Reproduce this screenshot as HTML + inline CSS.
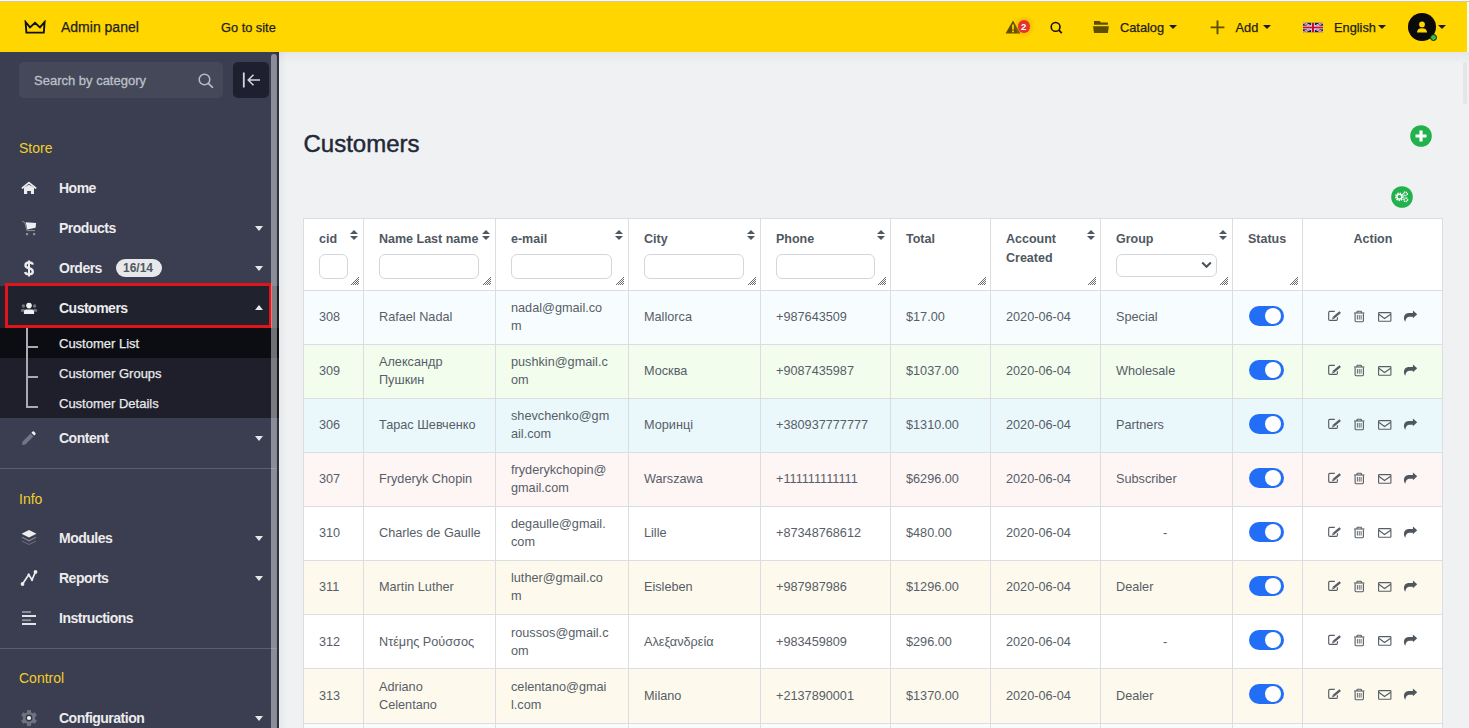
<!DOCTYPE html><html><head><meta charset="utf-8"><style>
*{box-sizing:border-box;margin:0;padding:0}
svg{display:block}
html,body{width:1469px;height:728px;overflow:hidden;font-family:"Liberation Sans",sans-serif;background:#eff1f3;position:relative}
.t{position:absolute;white-space:nowrap;line-height:1}
.ab{position:absolute}
#topline{position:absolute;left:0;top:0;width:1469px;height:2px;background:linear-gradient(to bottom,#f8f9fb 0,#f8f9fb 1px,#d3c89a 1px,#d3c89a 2px)}
#top{position:absolute;left:0;top:2px;width:1467px;height:50px;background:#ffd600}
#rscroll{position:absolute;left:1467px;top:2px;width:2px;height:50px;background:#fdfaee}
#side{position:absolute;left:0;top:52px;width:279px;height:676px;background:#3b3e50;overflow:hidden}
#sthumb{position:absolute;left:271px;top:54px;width:6px;height:674px;background:rgba(255,255,255,0.41);border-radius:3px 3px 0 0}
#strack{position:absolute;left:276px;top:52px;width:3px;height:676px;background:rgba(0,0,0,0.18)}
.mi{color:#ececee;font-weight:bold;font-size:14px;letter-spacing:-0.5px}
.sub{color:#e9e9ec;font-size:13px;-webkit-text-stroke:0.25px #e9e9ec}
.sec{color:#f1cf2b;font-size:14px}
.cd{position:absolute;width:0;height:0;border-left:4.5px solid transparent;border-right:4.5px solid transparent;border-top:5px solid #e8e8ea}
.cu{position:absolute;width:0;height:0;border-left:4.5px solid transparent;border-right:4.5px solid transparent;border-bottom:5px solid #e8e8ea}
.tc{position:absolute;width:0;height:0;border-left:4px solid transparent;border-right:4px solid transparent;border-top:4.5px solid #1a1a1a}
.hd{color:#4f5861;font-weight:bold;font-size:12.5px}
.cell{color:#575e68;font-size:12.7px}
.inp{position:absolute;height:25px;border:1px solid #d4d6d9;border-radius:6px;background:#fff}
.grip{position:absolute;width:8px;height:8px}
.sort{position:absolute;width:8px;height:10px}
</style></head><body><div id="topline"></div><div id="top"></div><div id="rscroll"></div><svg class="ab" style="left:24px;top:20px" width="23" height="16" viewBox="0 0 23 16"><path d="M1.6 2 L6 7.4 L11 2.8 L16 7.4 L20.6 2 L19.8 12.6 L2.4 12.6 Z" fill="none" stroke="#111" stroke-width="1.9" stroke-linejoin="miter"/></svg><div class="t" style="left:61px;top:20px;font-size:14px;color:#1e1e1e;-webkit-text-stroke:0.25px #1e1e1e">Admin panel</div><div class="t" style="left:221px;top:21.5px;font-size:12.8px;color:#1e1e1e;-webkit-text-stroke:0.25px #1e1e1e">Go to site</div><svg class="ab" style="left:1005px;top:20px" width="16" height="14" viewBox="0 0 16 14"><path d="M8 0.5 L15.5 13.5 L0.5 13.5 Z" fill="#5f5000"/><rect x="7.1" y="4.5" width="1.8" height="5" fill="#ffd600"/><rect x="7.1" y="10.5" width="1.8" height="1.8" fill="#ffd600"/></svg><div class="ab" style="left:1017.5px;top:20px;width:12.5px;height:12.5px;border-radius:50%;background:#e3342f;box-shadow:0 0 3px 3px rgba(235,150,0,0.3)"></div><div class="t" style="left:1021px;top:22.2px;font-size:9.5px;font-weight:bold;color:#fff">2</div><svg class="ab" style="left:1050px;top:21px" width="14" height="14" viewBox="0 0 14 14"><circle cx="5.6" cy="5.9" r="4.4" fill="none" stroke="#111" stroke-width="1.6"/><path d="M8.8 9.1 L11.8 12.1" stroke="#111" stroke-width="1.7"/></svg><svg class="ab" style="left:1092px;top:20px" width="18" height="15" viewBox="0 0 18 15"><path d="M2 1 H7.6 L9 2.6 H15.9 V4.8 H2 Z" fill="#5c4e00"/><path d="M1 6.2 H16.9 L15.9 12.9 H2 Z" fill="#5c4e00"/></svg><div class="t" style="left:1120px;top:21.7px;font-size:12.8px;color:#1e1e1e;-webkit-text-stroke:0.25px #1e1e1e">Catalog</div><div class="tc" style="left:1169px;top:25px"></div><svg class="ab" style="left:1209.5px;top:19.5px" width="15" height="15" viewBox="0 0 15 15"><path d="M7.5 0.6 V14.2 M0.6 7.4 H14.4" stroke="#5c4e00" stroke-width="1.9"/></svg><div class="t" style="left:1235.5px;top:21.7px;font-size:12.8px;color:#1e1e1e;-webkit-text-stroke:0.25px #1e1e1e">Add</div><div class="tc" style="left:1263px;top:25px"></div><svg class="ab" style="left:1303px;top:22px" width="20" height="11" viewBox="0 0 60 30"><clipPath id="fc"><rect width="60" height="30"/></clipPath><g clip-path="url(#fc)"><rect width="60" height="30" fill="#012169"/><path d="M0,0 L60,30 M60,0 L0,30" stroke="#fff" stroke-width="6"/><path d="M0,0 L60,30 M60,0 L0,30" stroke="#C8102E" stroke-width="2.5"/><path d="M30,0 V30 M0,15 H60" stroke="#fff" stroke-width="10"/><path d="M30,0 V30 M0,15 H60" stroke="#C8102E" stroke-width="6"/></g></svg><div class="t" style="left:1334px;top:21.7px;font-size:12.8px;color:#1e1e1e;-webkit-text-stroke:0.25px #1e1e1e">English</div><div class="tc" style="left:1378px;top:25px"></div><div class="ab" style="left:1408px;top:13px;width:28px;height:28px;border-radius:50%;background:#0a0a0a"></div><svg class="ab" style="left:1414px;top:18px" width="16" height="16" viewBox="0 0 16 16"><circle cx="8" cy="6.4" r="2.9" fill="#ffd600"/><path d="M3 14.6 Q3 10.2 8 10.2 Q13 10.2 13 14.6 Z" fill="#ffd600"/></svg><div class="ab" style="left:1429.5px;top:34px;width:7px;height:7px;border-radius:50%;background:#2fbf4a;border:1px solid #1a1a00"></div><div class="tc" style="left:1438px;top:25px"></div><div class="ab" style="left:1463px;top:62px;width:4px;height:42px;border-radius:2px;background:rgba(0,0,0,0.045)"></div><div id="side"></div><div class="ab" style="left:19px;top:62px;width:204px;height:36px;border-radius:5px;background:#444858"></div><div class="t" style="left:34px;top:73.5px;font-size:13px;color:#bdc0ca;-webkit-text-stroke:0.3px #bdc0ca">Search by category</div><svg class="ab" style="left:198px;top:73px" width="16" height="15" viewBox="0 0 16 15"><circle cx="6.5" cy="6.5" r="5.3" fill="none" stroke="#b9bcc6" stroke-width="1.5"/><path d="M10.3 10.3 L14.5 14.3" stroke="#b9bcc6" stroke-width="1.6" stroke-linecap="round"/></svg><div class="ab" style="left:233px;top:62px;width:36px;height:36px;border-radius:5px;background:#1e2030"></div><svg class="ab" style="left:242px;top:72px" width="19" height="16" viewBox="0 0 19 16"><path d="M1.8 0.5 V15.5" stroke="#d6d7dd" stroke-width="1.8"/><path d="M6.2 8 H18 M11.5 2.7 L6.2 8 L11.5 13.3" fill="none" stroke="#d6d7dd" stroke-width="1.5"/></svg><div class="t sec" style="left:19px;top:141px">Store</div><div class="t mi" style="left:59px;top:180.5px">Home</div><svg class="ab" style="left:17px;top:176px" width="25" height="25" viewBox="0 0 25 25"><path d="M5.4 12 L11.9 6.6 L18.6 12" fill="none" stroke="#ececee" stroke-width="1.7" stroke-linecap="round" stroke-linejoin="round"/><path d="M7 11.6 L11.9 8.7 L17 11.6 V18 H13.9 V15.1 H10.2 V18 H7 Z" fill="#ececee"/></svg><div class="t mi" style="left:59px;top:220.5px">Products</div><svg class="ab" style="left:17px;top:215px" width="25" height="25" viewBox="0 0 25 25"><path d="M5.2 6.3 L7.9 7.6 L10 15.6 H18" fill="none" stroke="#8e909a" stroke-width="1"/><path d="M8.7 7.3 L19.1 8 L18.6 12.8 L10.3 14.5 Z" fill="#eeeef0"/><rect x="9" y="18" width="2.2" height="2.2" fill="#8e909a"/><rect x="16" y="18" width="2.2" height="2.2" fill="#8e909a"/></svg><div class="cd" style="left:255px;top:226px"></div><div class="t mi" style="left:59px;top:260.5px">Orders</div><svg class="ab" style="left:24px;top:260px" width="10" height="17" viewBox="0 0 10 17"><path d="M5 0.5 V16.5" stroke="#ececee" stroke-width="2"/><path d="M8.8 4.6 Q8.4 2.5 5 2.5 Q1.4 2.5 1.4 5.2 Q1.4 7.3 5 8.2 Q8.8 9.2 8.8 11.8 Q8.8 14.4 5 14.4 Q1.6 14.4 1.1 12" fill="none" stroke="#ececee" stroke-width="2.3"/></svg><div class="cd" style="left:255px;top:266px"></div><div class="ab" style="left:116px;top:259px;width:46px;height:18px;border-radius:9px;background:#e8e8ea"></div><div class="t" style="left:123px;top:262px;font-size:12px;font-weight:bold;color:#4f5862">16/14</div><div class="ab" style="left:0;top:286px;width:279px;height:42px;background:#20222d"></div><div class="ab" style="left:0;top:328px;width:279px;height:90px;background:#1e1f2a"></div><div class="ab" style="left:0;top:328px;width:279px;height:30px;background:#0c0d13"></div><div class="ab" style="left:5px;top:283px;width:267px;height:45px;border:3px solid #e0141a"></div><div class="t mi" style="left:59px;top:300.5px">Customers</div><svg class="ab" style="left:17px;top:296px" width="25" height="25" viewBox="0 0 25 25"><circle cx="6.4" cy="10" r="1.7" fill="#70727c"/><circle cx="17.6" cy="10" r="1.7" fill="#70727c"/><path d="M3.9 15.8 V14.2 Q3.9 12.9 5.5 12.9 H7.8 L6.6 15.8 Z M20.1 15.8 V14.2 Q20.1 12.9 18.5 12.9 H16.2 L17.4 15.8 Z" fill="#70727c"/><circle cx="12" cy="9.6" r="2.8" fill="#f0f0f2"/><path d="M6.9 18 V15.4 Q6.9 13.6 9 13.6 H15 Q17.1 13.6 17.1 15.4 V18 Z" fill="#f0f0f2"/></svg><div class="cu" style="left:255px;top:305px"></div><div class="ab" style="left:26px;top:328px;width:2px;height:80px;background:#a9abb2"></div><div class="ab" style="left:26px;top:346px;width:12px;height:2px;background:#a9abb2"></div><div class="ab" style="left:26px;top:376px;width:12px;height:2px;background:#a9abb2"></div><div class="ab" style="left:26px;top:406px;width:12px;height:2px;background:#a9abb2"></div><div class="t sub" style="left:59px;top:336.8px">Customer List</div><div class="t sub" style="left:59px;top:366.8px">Customer Groups</div><div class="t sub" style="left:59px;top:396.8px">Customer Details</div><div class="t mi" style="left:59px;top:430.5px">Content</div><svg class="ab" style="left:20px;top:429px" width="18" height="18" viewBox="0 0 18 18"><path d="M2 16 L2.6 12.6 L10.6 4.6 L13.4 7.4 L5.4 15.4 Z" fill="#737682"/><path d="M11.4 3.8 L12.6 2.6 Q13.3 1.9 14 2.6 L15.4 4 Q16.1 4.7 15.4 5.4 L14.2 6.6 Z" fill="#f2f2f4"/></svg><div class="cd" style="left:255px;top:436px"></div><div class="ab" style="left:0;top:468px;width:277px;height:1px;background:#5a5e70"></div><div class="t sec" style="left:19px;top:491.5px">Info</div><div class="t mi" style="left:59px;top:530.5px">Modules</div><svg class="ab" style="left:21px;top:529px" width="16" height="17" viewBox="0 0 16 17"><path d="M8 1 L15.5 4.8 L8 8.6 L0.5 4.8 Z" fill="#eeeef0"/><path d="M1.6 8 L8 11.3 L14.4 8 L15.5 8.6 L8 12.4 L0.5 8.6 Z" fill="#8e909a"/><path d="M1.6 11.7 L8 15 L14.4 11.7 L15.5 12.3 L8 16.1 L0.5 12.3 Z" fill="#6c6f7b"/></svg><div class="cd" style="left:255px;top:536px"></div><div class="t mi" style="left:59px;top:570.5px">Reports</div><svg class="ab" style="left:20px;top:569px" width="19" height="18" viewBox="0 0 19 18"><path d="M2.5 15 L8.7 5.8 L12 10.8 L15.5 2.9" fill="none" stroke="#ececee" stroke-width="1.7"/><circle cx="2.5" cy="15" r="1.9" fill="#ececee"/><circle cx="15.5" cy="2.9" r="1.9" fill="#ececee"/><circle cx="8.7" cy="5.8" r="1.2" fill="#ececee"/><circle cx="12" cy="10.8" r="1.2" fill="#ececee"/></svg><div class="cd" style="left:255px;top:576px"></div><div class="t mi" style="left:59px;top:610.5px">Instructions</div><svg class="ab" style="left:22px;top:610px" width="15" height="16" viewBox="0 0 15 16"><path d="M0 2 H9" stroke="#8e909a" stroke-width="1.9"/><path d="M0 6 H14" stroke="#ececee" stroke-width="1.9"/><path d="M0 10.2 H9" stroke="#8e909a" stroke-width="1.9"/><path d="M0 14 H14" stroke="#ececee" stroke-width="1.9"/></svg><div class="ab" style="left:0;top:648px;width:277px;height:1px;background:#5a5e70"></div><div class="t sec" style="left:19px;top:671px">Control</div><div class="t mi" style="left:59px;top:710.5px">Configuration</div><svg class="ab" style="left:20px;top:709px" width="18" height="18" viewBox="0 0 18 18"><g fill="#70737f"><circle cx="9" cy="9" r="6"/><rect x="7" y="1" width="4" height="16" rx="0.6"/><rect x="7" y="1" width="4" height="16" rx="0.6" transform="rotate(60 9 9)"/><rect x="7" y="1" width="4" height="16" rx="0.6" transform="rotate(120 9 9)"/></g><circle cx="9" cy="9" r="3.4" fill="#33364a"/><circle cx="9" cy="9" r="2.1" fill="#f0f0f2"/></svg><div class="cd" style="left:255px;top:716px"></div><div id="strack"></div><div id="sthumb"></div><div class="ab" style="left:279px;top:52px;width:1190px;height:12px;background:linear-gradient(to bottom,rgba(0,0,0,0.045),rgba(0,0,0,0))"></div><div class="ab" style="left:279px;top:52px;width:8px;height:676px;background:linear-gradient(to right,rgba(0,0,0,0.035),rgba(0,0,0,0))"></div><div class="t" style="left:303.5px;top:132px;font-size:24px;color:#1f2937;-webkit-text-stroke:0.45px #1f2937">Customers</div><svg class="ab" style="left:1410px;top:125px" width="22" height="22" viewBox="0 0 22 22"><circle cx="11" cy="11" r="10.8" fill="#22b24c"/><path d="M11 5.5 V16.5 M5.5 11 H16.5" stroke="#fff" stroke-width="3.2"/></svg><svg class="ab" style="left:1391px;top:186px" width="22" height="22" viewBox="0 0 22 22"><circle cx="11" cy="11" r="10.8" fill="#22b24c"/><circle cx="8.4" cy="10.8" r="3.3" fill="none" stroke="#fff" stroke-width="2.2" stroke-dasharray="1.3 0.9"/><circle cx="8.4" cy="10.8" r="2.4" fill="none" stroke="#fff" stroke-width="1.3"/><circle cx="14.4" cy="7.9" r="1.8" fill="none" stroke="#fff" stroke-width="1.5" stroke-dasharray="1 0.6"/><circle cx="14.8" cy="13.8" r="1.8" fill="none" stroke="#fff" stroke-width="1.5" stroke-dasharray="1 0.6"/></svg><div class="ab" style="left:303px;top:218px;width:1140px;height:72px;background:#fff"></div><div class="ab" style="left:303px;top:290px;width:1140px;height:54px;background:#f7fdfe"></div><div class="ab" style="left:303px;top:344px;width:1140px;height:54px;background:#f2fdee"></div><div class="ab" style="left:303px;top:398px;width:1140px;height:54px;background:#eaf8fc"></div><div class="ab" style="left:303px;top:452px;width:1140px;height:54px;background:#fef5f5"></div><div class="ab" style="left:303px;top:506px;width:1140px;height:54px;background:#ffffff"></div><div class="ab" style="left:303px;top:560px;width:1140px;height:54px;background:#fdf9ec"></div><div class="ab" style="left:303px;top:614px;width:1140px;height:54px;background:#ffffff"></div><div class="ab" style="left:303px;top:668px;width:1140px;height:55px;background:#fdf9ec"></div><div class="ab" style="left:303px;top:723px;width:1140px;height:54px;background:#f7fdfe"></div><div class="ab" style="left:303px;top:218px;width:1px;height:510px;background:#dcdde1"></div><div class="ab" style="left:363px;top:218px;width:1px;height:510px;background:#dcdde1"></div><div class="ab" style="left:495px;top:218px;width:1px;height:510px;background:#dcdde1"></div><div class="ab" style="left:628px;top:218px;width:1px;height:510px;background:#dcdde1"></div><div class="ab" style="left:760px;top:218px;width:1px;height:510px;background:#dcdde1"></div><div class="ab" style="left:890px;top:218px;width:1px;height:510px;background:#dcdde1"></div><div class="ab" style="left:990px;top:218px;width:1px;height:510px;background:#dcdde1"></div><div class="ab" style="left:1100px;top:218px;width:1px;height:510px;background:#dcdde1"></div><div class="ab" style="left:1232px;top:218px;width:1px;height:510px;background:#dcdde1"></div><div class="ab" style="left:1302px;top:218px;width:1px;height:510px;background:#dcdde1"></div><div class="ab" style="left:1442px;top:218px;width:1px;height:510px;background:#dcdde1"></div><div class="ab" style="left:303px;top:218px;width:1140px;height:1px;background:#dcdde1"></div><div class="ab" style="left:303px;top:290px;width:1140px;height:1px;background:#dcdde1"></div><div class="ab" style="left:303px;top:344px;width:1140px;height:1px;background:#dcdde1"></div><div class="ab" style="left:303px;top:398px;width:1140px;height:1px;background:#dcdde1"></div><div class="ab" style="left:303px;top:452px;width:1140px;height:1px;background:#dcdde1"></div><div class="ab" style="left:303px;top:506px;width:1140px;height:1px;background:#dcdde1"></div><div class="ab" style="left:303px;top:560px;width:1140px;height:1px;background:#dcdde1"></div><div class="ab" style="left:303px;top:614px;width:1140px;height:1px;background:#dcdde1"></div><div class="ab" style="left:303px;top:668px;width:1140px;height:1px;background:#dcdde1"></div><div class="ab" style="left:303px;top:723px;width:1140px;height:1px;background:#dcdde1"></div><div class="t hd" style="left:319px;top:232.9px;">cid</div><div class="t hd" style="left:379px;top:232.9px;">Name Last name</div><div class="t hd" style="left:511px;top:232.9px;">e-mail</div><div class="t hd" style="left:644px;top:232.9px;">City</div><div class="t hd" style="left:776px;top:232.9px;">Phone</div><div class="t hd" style="left:906px;top:232.9px;">Total</div><div class="t hd" style="left:1116px;top:232.9px;">Group</div><div class="t hd" style="left:1248px;top:232.9px;">Status</div><div class="t hd" style="left:1006px;top:232.9px;">Account</div><div class="t hd" style="left:1006px;top:251.9px;">Created</div><div class="t hd" style="left:1353.5px;top:232.9px;">Action</div><div class="ab" style="left:350px;top:230px;width:8px;height:10px"><svg width="8" height="10" viewBox="0 0 8 10"><path d="M4 0 L8 4 L0 4 Z M4 10 L8 6 L0 6 Z" fill="#4f5861"/></svg></div><div class="ab" style="left:482px;top:230px;width:8px;height:10px"><svg width="8" height="10" viewBox="0 0 8 10"><path d="M4 0 L8 4 L0 4 Z M4 10 L8 6 L0 6 Z" fill="#4f5861"/></svg></div><div class="ab" style="left:615px;top:230px;width:8px;height:10px"><svg width="8" height="10" viewBox="0 0 8 10"><path d="M4 0 L8 4 L0 4 Z M4 10 L8 6 L0 6 Z" fill="#4f5861"/></svg></div><div class="ab" style="left:747px;top:230px;width:8px;height:10px"><svg width="8" height="10" viewBox="0 0 8 10"><path d="M4 0 L8 4 L0 4 Z M4 10 L8 6 L0 6 Z" fill="#4f5861"/></svg></div><div class="ab" style="left:877px;top:230px;width:8px;height:10px"><svg width="8" height="10" viewBox="0 0 8 10"><path d="M4 0 L8 4 L0 4 Z M4 10 L8 6 L0 6 Z" fill="#4f5861"/></svg></div><div class="ab" style="left:1087px;top:230px;width:8px;height:10px"><svg width="8" height="10" viewBox="0 0 8 10"><path d="M4 0 L8 4 L0 4 Z M4 10 L8 6 L0 6 Z" fill="#4f5861"/></svg></div><div class="ab" style="left:1219px;top:230px;width:8px;height:10px"><svg width="8" height="10" viewBox="0 0 8 10"><path d="M4 0 L8 4 L0 4 Z M4 10 L8 6 L0 6 Z" fill="#4f5861"/></svg></div><div class="ab" style="left:351px;top:277px;width:8px;height:8px"><svg width="8" height="8" viewBox="0 0 8 8"><path d="M8 0 L0 8 M8 2 L2 8 M8 4 L4 8 M8 6 L6 8" stroke="#444" stroke-width="0.8"/></svg></div><div class="ab" style="left:483px;top:277px;width:8px;height:8px"><svg width="8" height="8" viewBox="0 0 8 8"><path d="M8 0 L0 8 M8 2 L2 8 M8 4 L4 8 M8 6 L6 8" stroke="#444" stroke-width="0.8"/></svg></div><div class="ab" style="left:616px;top:277px;width:8px;height:8px"><svg width="8" height="8" viewBox="0 0 8 8"><path d="M8 0 L0 8 M8 2 L2 8 M8 4 L4 8 M8 6 L6 8" stroke="#444" stroke-width="0.8"/></svg></div><div class="ab" style="left:748px;top:277px;width:8px;height:8px"><svg width="8" height="8" viewBox="0 0 8 8"><path d="M8 0 L0 8 M8 2 L2 8 M8 4 L4 8 M8 6 L6 8" stroke="#444" stroke-width="0.8"/></svg></div><div class="ab" style="left:878px;top:277px;width:8px;height:8px"><svg width="8" height="8" viewBox="0 0 8 8"><path d="M8 0 L0 8 M8 2 L2 8 M8 4 L4 8 M8 6 L6 8" stroke="#444" stroke-width="0.8"/></svg></div><div class="ab" style="left:978px;top:277px;width:8px;height:8px"><svg width="8" height="8" viewBox="0 0 8 8"><path d="M8 0 L0 8 M8 2 L2 8 M8 4 L4 8 M8 6 L6 8" stroke="#444" stroke-width="0.8"/></svg></div><div class="ab" style="left:1088px;top:277px;width:8px;height:8px"><svg width="8" height="8" viewBox="0 0 8 8"><path d="M8 0 L0 8 M8 2 L2 8 M8 4 L4 8 M8 6 L6 8" stroke="#444" stroke-width="0.8"/></svg></div><div class="ab" style="left:1220px;top:277px;width:8px;height:8px"><svg width="8" height="8" viewBox="0 0 8 8"><path d="M8 0 L0 8 M8 2 L2 8 M8 4 L4 8 M8 6 L6 8" stroke="#444" stroke-width="0.8"/></svg></div><div class="ab" style="left:1290px;top:277px;width:8px;height:8px"><svg width="8" height="8" viewBox="0 0 8 8"><path d="M8 0 L0 8 M8 2 L2 8 M8 4 L4 8 M8 6 L6 8" stroke="#444" stroke-width="0.8"/></svg></div><div class="inp" style="left:319px;top:254px;width:29px"></div><div class="inp" style="left:379px;top:254px;width:100px"></div><div class="inp" style="left:511px;top:254px;width:101px"></div><div class="inp" style="left:644px;top:254px;width:100px"></div><div class="inp" style="left:776px;top:254px;width:99px"></div><div class="inp" style="left:1116px;top:254px;width:101px;height:23px"></div><svg class="ab" style="left:1201px;top:261px" width="11" height="8" viewBox="0 0 11 8"><path d="M1.2 1.5 L5.5 5.8 L9.8 1.5" fill="none" stroke="#4a525b" stroke-width="2"/></svg><div class="t cell" style="left:319px;top:310.7px;">308</div><div class="t cell" style="left:379px;top:310.7px;">Rafael Nadal</div><div class="t cell" style="left:511px;top:302.0px;">nadal@gmail.co</div><div class="t cell" style="left:511px;top:319.5px;">m</div><div class="t cell" style="left:644px;top:310.7px;">Mallorca</div><div class="t cell" style="left:776px;top:310.7px;">+987643509</div><div class="t cell" style="left:906px;top:310.7px;">$17.00</div><div class="t cell" style="left:1116px;top:310.7px;">Special</div><div class="t cell" style="left:1006px;top:310.7px;">2020-06-04</div><div class="ab" style="left:1249px;top:306px;width:35px;height:20px;border-radius:10px;background:#236ef7"></div><div class="ab" style="left:1265px;top:308px;width:16px;height:16px;border-radius:50%;background:#fff"></div><svg class="ab" style="left:1327px;top:310px" width="15" height="12" viewBox="0 0 15 12"><path d="M7.8 1.4 H2.8 Q1.7 1.4 1.7 2.5 V9.3 Q1.7 10.4 2.8 10.4 H9.3 Q10.4 10.4 10.4 9.3 V7.2" fill="none" stroke="#565d64" stroke-width="1.15"/><path d="M6.6 7.6 L13.2 2.1" stroke="#565d64" stroke-width="2.4"/><path d="M5.79 6.65 L7.41 8.55 L5.0 9.5 Z" fill="#565d64"/></svg><svg class="ab" style="left:1353px;top:310px" width="12" height="13" viewBox="0 0 12 13"><path d="M1 3 H11.4" stroke="#565d64" stroke-width="1.1"/><path d="M4 3 V1.8 Q4 1.2 4.6 1.2 H7.8 Q8.4 1.2 8.4 1.8 V3" fill="none" stroke="#565d64" stroke-width="1.1"/><path d="M2.1 3.4 V10.8 Q2.1 11.7 3 11.7 H9.5 Q10.4 11.7 10.4 10.8 V3.4" fill="none" stroke="#565d64" stroke-width="1.1"/><path d="M4.4 5 V9.6 M6.25 5 V9.6 M8.1 5 V9.6" stroke="#565d64" stroke-width="0.9"/></svg><svg class="ab" style="left:1377px;top:311px" width="15" height="12" viewBox="0 0 15 12"><rect x="1.6" y="1.6" width="12.3" height="8.7" rx="0.6" fill="none" stroke="#565d64" stroke-width="1.1"/><path d="M1.8 3.2 L7.5 7.5 L13.7 3.2" fill="none" stroke="#565d64" stroke-width="1.1"/></svg><svg class="ab" style="left:1403px;top:310px" width="15" height="13" viewBox="0 0 15 13"><path d="M14.2 4.3 L9.9 0.4 V3.0 L5.5 3.0 Q1 3.3 0.9 8.3 Q1.1 10.4 2.3 11.8 Q2.8 7.0 6 6.7 L9.9 6.7 V8.2 Z" fill="#4f565d"/></svg><div class="t cell" style="left:319px;top:364.7px;">309</div><div class="t cell" style="left:379px;top:356.0px;">Александр</div><div class="t cell" style="left:379px;top:373.5px;">Пушкин</div><div class="t cell" style="left:511px;top:356.0px;">pushkin@gmail.c</div><div class="t cell" style="left:511px;top:373.5px;">om</div><div class="t cell" style="left:644px;top:364.7px;">Москва</div><div class="t cell" style="left:776px;top:364.7px;">+9087435987</div><div class="t cell" style="left:906px;top:364.7px;">$1037.00</div><div class="t cell" style="left:1116px;top:364.7px;">Wholesale</div><div class="t cell" style="left:1006px;top:364.7px;">2020-06-04</div><div class="ab" style="left:1249px;top:360px;width:35px;height:20px;border-radius:10px;background:#236ef7"></div><div class="ab" style="left:1265px;top:362px;width:16px;height:16px;border-radius:50%;background:#fff"></div><svg class="ab" style="left:1327px;top:364px" width="15" height="12" viewBox="0 0 15 12"><path d="M7.8 1.4 H2.8 Q1.7 1.4 1.7 2.5 V9.3 Q1.7 10.4 2.8 10.4 H9.3 Q10.4 10.4 10.4 9.3 V7.2" fill="none" stroke="#565d64" stroke-width="1.15"/><path d="M6.6 7.6 L13.2 2.1" stroke="#565d64" stroke-width="2.4"/><path d="M5.79 6.65 L7.41 8.55 L5.0 9.5 Z" fill="#565d64"/></svg><svg class="ab" style="left:1353px;top:364px" width="12" height="13" viewBox="0 0 12 13"><path d="M1 3 H11.4" stroke="#565d64" stroke-width="1.1"/><path d="M4 3 V1.8 Q4 1.2 4.6 1.2 H7.8 Q8.4 1.2 8.4 1.8 V3" fill="none" stroke="#565d64" stroke-width="1.1"/><path d="M2.1 3.4 V10.8 Q2.1 11.7 3 11.7 H9.5 Q10.4 11.7 10.4 10.8 V3.4" fill="none" stroke="#565d64" stroke-width="1.1"/><path d="M4.4 5 V9.6 M6.25 5 V9.6 M8.1 5 V9.6" stroke="#565d64" stroke-width="0.9"/></svg><svg class="ab" style="left:1377px;top:365px" width="15" height="12" viewBox="0 0 15 12"><rect x="1.6" y="1.6" width="12.3" height="8.7" rx="0.6" fill="none" stroke="#565d64" stroke-width="1.1"/><path d="M1.8 3.2 L7.5 7.5 L13.7 3.2" fill="none" stroke="#565d64" stroke-width="1.1"/></svg><svg class="ab" style="left:1403px;top:364px" width="15" height="13" viewBox="0 0 15 13"><path d="M14.2 4.3 L9.9 0.4 V3.0 L5.5 3.0 Q1 3.3 0.9 8.3 Q1.1 10.4 2.3 11.8 Q2.8 7.0 6 6.7 L9.9 6.7 V8.2 Z" fill="#4f565d"/></svg><div class="t cell" style="left:319px;top:418.7px;">306</div><div class="t cell" style="left:379px;top:418.7px;">Тарас Шевченко</div><div class="t cell" style="left:511px;top:410.0px;">shevchenko@gm</div><div class="t cell" style="left:511px;top:427.5px;">ail.com</div><div class="t cell" style="left:644px;top:418.7px;">Моринці</div><div class="t cell" style="left:776px;top:418.7px;">+380937777777</div><div class="t cell" style="left:906px;top:418.7px;">$1310.00</div><div class="t cell" style="left:1116px;top:418.7px;">Partners</div><div class="t cell" style="left:1006px;top:418.7px;">2020-06-04</div><div class="ab" style="left:1249px;top:414px;width:35px;height:20px;border-radius:10px;background:#236ef7"></div><div class="ab" style="left:1265px;top:416px;width:16px;height:16px;border-radius:50%;background:#fff"></div><svg class="ab" style="left:1327px;top:418px" width="15" height="12" viewBox="0 0 15 12"><path d="M7.8 1.4 H2.8 Q1.7 1.4 1.7 2.5 V9.3 Q1.7 10.4 2.8 10.4 H9.3 Q10.4 10.4 10.4 9.3 V7.2" fill="none" stroke="#565d64" stroke-width="1.15"/><path d="M6.6 7.6 L13.2 2.1" stroke="#565d64" stroke-width="2.4"/><path d="M5.79 6.65 L7.41 8.55 L5.0 9.5 Z" fill="#565d64"/></svg><svg class="ab" style="left:1353px;top:418px" width="12" height="13" viewBox="0 0 12 13"><path d="M1 3 H11.4" stroke="#565d64" stroke-width="1.1"/><path d="M4 3 V1.8 Q4 1.2 4.6 1.2 H7.8 Q8.4 1.2 8.4 1.8 V3" fill="none" stroke="#565d64" stroke-width="1.1"/><path d="M2.1 3.4 V10.8 Q2.1 11.7 3 11.7 H9.5 Q10.4 11.7 10.4 10.8 V3.4" fill="none" stroke="#565d64" stroke-width="1.1"/><path d="M4.4 5 V9.6 M6.25 5 V9.6 M8.1 5 V9.6" stroke="#565d64" stroke-width="0.9"/></svg><svg class="ab" style="left:1377px;top:419px" width="15" height="12" viewBox="0 0 15 12"><rect x="1.6" y="1.6" width="12.3" height="8.7" rx="0.6" fill="none" stroke="#565d64" stroke-width="1.1"/><path d="M1.8 3.2 L7.5 7.5 L13.7 3.2" fill="none" stroke="#565d64" stroke-width="1.1"/></svg><svg class="ab" style="left:1403px;top:418px" width="15" height="13" viewBox="0 0 15 13"><path d="M14.2 4.3 L9.9 0.4 V3.0 L5.5 3.0 Q1 3.3 0.9 8.3 Q1.1 10.4 2.3 11.8 Q2.8 7.0 6 6.7 L9.9 6.7 V8.2 Z" fill="#4f565d"/></svg><div class="t cell" style="left:319px;top:472.7px;">307</div><div class="t cell" style="left:379px;top:472.7px;">Fryderyk Chopin</div><div class="t cell" style="left:511px;top:464.0px;">fryderykchopin@</div><div class="t cell" style="left:511px;top:481.5px;">gmail.com</div><div class="t cell" style="left:644px;top:472.7px;">Warszawa</div><div class="t cell" style="left:776px;top:472.7px;">+111111111111</div><div class="t cell" style="left:906px;top:472.7px;">$6296.00</div><div class="t cell" style="left:1116px;top:472.7px;">Subscriber</div><div class="t cell" style="left:1006px;top:472.7px;">2020-06-04</div><div class="ab" style="left:1249px;top:468px;width:35px;height:20px;border-radius:10px;background:#236ef7"></div><div class="ab" style="left:1265px;top:470px;width:16px;height:16px;border-radius:50%;background:#fff"></div><svg class="ab" style="left:1327px;top:472px" width="15" height="12" viewBox="0 0 15 12"><path d="M7.8 1.4 H2.8 Q1.7 1.4 1.7 2.5 V9.3 Q1.7 10.4 2.8 10.4 H9.3 Q10.4 10.4 10.4 9.3 V7.2" fill="none" stroke="#565d64" stroke-width="1.15"/><path d="M6.6 7.6 L13.2 2.1" stroke="#565d64" stroke-width="2.4"/><path d="M5.79 6.65 L7.41 8.55 L5.0 9.5 Z" fill="#565d64"/></svg><svg class="ab" style="left:1353px;top:472px" width="12" height="13" viewBox="0 0 12 13"><path d="M1 3 H11.4" stroke="#565d64" stroke-width="1.1"/><path d="M4 3 V1.8 Q4 1.2 4.6 1.2 H7.8 Q8.4 1.2 8.4 1.8 V3" fill="none" stroke="#565d64" stroke-width="1.1"/><path d="M2.1 3.4 V10.8 Q2.1 11.7 3 11.7 H9.5 Q10.4 11.7 10.4 10.8 V3.4" fill="none" stroke="#565d64" stroke-width="1.1"/><path d="M4.4 5 V9.6 M6.25 5 V9.6 M8.1 5 V9.6" stroke="#565d64" stroke-width="0.9"/></svg><svg class="ab" style="left:1377px;top:473px" width="15" height="12" viewBox="0 0 15 12"><rect x="1.6" y="1.6" width="12.3" height="8.7" rx="0.6" fill="none" stroke="#565d64" stroke-width="1.1"/><path d="M1.8 3.2 L7.5 7.5 L13.7 3.2" fill="none" stroke="#565d64" stroke-width="1.1"/></svg><svg class="ab" style="left:1403px;top:472px" width="15" height="13" viewBox="0 0 15 13"><path d="M14.2 4.3 L9.9 0.4 V3.0 L5.5 3.0 Q1 3.3 0.9 8.3 Q1.1 10.4 2.3 11.8 Q2.8 7.0 6 6.7 L9.9 6.7 V8.2 Z" fill="#4f565d"/></svg><div class="t cell" style="left:319px;top:526.7px;">310</div><div class="t cell" style="left:379px;top:526.7px;">Charles de Gaulle</div><div class="t cell" style="left:511px;top:518.0px;">degaulle@gmail.</div><div class="t cell" style="left:511px;top:535.5px;">com</div><div class="t cell" style="left:644px;top:526.7px;">Lille</div><div class="t cell" style="left:776px;top:526.7px;">+87348768612</div><div class="t cell" style="left:906px;top:526.7px;">$480.00</div><div class="t cell" style="left:1163px;top:526.7px;">-</div><div class="t cell" style="left:1006px;top:526.7px;">2020-06-04</div><div class="ab" style="left:1249px;top:522px;width:35px;height:20px;border-radius:10px;background:#236ef7"></div><div class="ab" style="left:1265px;top:524px;width:16px;height:16px;border-radius:50%;background:#fff"></div><svg class="ab" style="left:1327px;top:526px" width="15" height="12" viewBox="0 0 15 12"><path d="M7.8 1.4 H2.8 Q1.7 1.4 1.7 2.5 V9.3 Q1.7 10.4 2.8 10.4 H9.3 Q10.4 10.4 10.4 9.3 V7.2" fill="none" stroke="#565d64" stroke-width="1.15"/><path d="M6.6 7.6 L13.2 2.1" stroke="#565d64" stroke-width="2.4"/><path d="M5.79 6.65 L7.41 8.55 L5.0 9.5 Z" fill="#565d64"/></svg><svg class="ab" style="left:1353px;top:526px" width="12" height="13" viewBox="0 0 12 13"><path d="M1 3 H11.4" stroke="#565d64" stroke-width="1.1"/><path d="M4 3 V1.8 Q4 1.2 4.6 1.2 H7.8 Q8.4 1.2 8.4 1.8 V3" fill="none" stroke="#565d64" stroke-width="1.1"/><path d="M2.1 3.4 V10.8 Q2.1 11.7 3 11.7 H9.5 Q10.4 11.7 10.4 10.8 V3.4" fill="none" stroke="#565d64" stroke-width="1.1"/><path d="M4.4 5 V9.6 M6.25 5 V9.6 M8.1 5 V9.6" stroke="#565d64" stroke-width="0.9"/></svg><svg class="ab" style="left:1377px;top:527px" width="15" height="12" viewBox="0 0 15 12"><rect x="1.6" y="1.6" width="12.3" height="8.7" rx="0.6" fill="none" stroke="#565d64" stroke-width="1.1"/><path d="M1.8 3.2 L7.5 7.5 L13.7 3.2" fill="none" stroke="#565d64" stroke-width="1.1"/></svg><svg class="ab" style="left:1403px;top:526px" width="15" height="13" viewBox="0 0 15 13"><path d="M14.2 4.3 L9.9 0.4 V3.0 L5.5 3.0 Q1 3.3 0.9 8.3 Q1.1 10.4 2.3 11.8 Q2.8 7.0 6 6.7 L9.9 6.7 V8.2 Z" fill="#4f565d"/></svg><div class="t cell" style="left:319px;top:580.7px;">311</div><div class="t cell" style="left:379px;top:580.7px;">Martin Luther</div><div class="t cell" style="left:511px;top:572.0px;">luther@gmail.co</div><div class="t cell" style="left:511px;top:589.5px;">m</div><div class="t cell" style="left:644px;top:580.7px;">Eisleben</div><div class="t cell" style="left:776px;top:580.7px;">+987987986</div><div class="t cell" style="left:906px;top:580.7px;">$1296.00</div><div class="t cell" style="left:1116px;top:580.7px;">Dealer</div><div class="t cell" style="left:1006px;top:580.7px;">2020-06-04</div><div class="ab" style="left:1249px;top:576px;width:35px;height:20px;border-radius:10px;background:#236ef7"></div><div class="ab" style="left:1265px;top:578px;width:16px;height:16px;border-radius:50%;background:#fff"></div><svg class="ab" style="left:1327px;top:580px" width="15" height="12" viewBox="0 0 15 12"><path d="M7.8 1.4 H2.8 Q1.7 1.4 1.7 2.5 V9.3 Q1.7 10.4 2.8 10.4 H9.3 Q10.4 10.4 10.4 9.3 V7.2" fill="none" stroke="#565d64" stroke-width="1.15"/><path d="M6.6 7.6 L13.2 2.1" stroke="#565d64" stroke-width="2.4"/><path d="M5.79 6.65 L7.41 8.55 L5.0 9.5 Z" fill="#565d64"/></svg><svg class="ab" style="left:1353px;top:580px" width="12" height="13" viewBox="0 0 12 13"><path d="M1 3 H11.4" stroke="#565d64" stroke-width="1.1"/><path d="M4 3 V1.8 Q4 1.2 4.6 1.2 H7.8 Q8.4 1.2 8.4 1.8 V3" fill="none" stroke="#565d64" stroke-width="1.1"/><path d="M2.1 3.4 V10.8 Q2.1 11.7 3 11.7 H9.5 Q10.4 11.7 10.4 10.8 V3.4" fill="none" stroke="#565d64" stroke-width="1.1"/><path d="M4.4 5 V9.6 M6.25 5 V9.6 M8.1 5 V9.6" stroke="#565d64" stroke-width="0.9"/></svg><svg class="ab" style="left:1377px;top:581px" width="15" height="12" viewBox="0 0 15 12"><rect x="1.6" y="1.6" width="12.3" height="8.7" rx="0.6" fill="none" stroke="#565d64" stroke-width="1.1"/><path d="M1.8 3.2 L7.5 7.5 L13.7 3.2" fill="none" stroke="#565d64" stroke-width="1.1"/></svg><svg class="ab" style="left:1403px;top:580px" width="15" height="13" viewBox="0 0 15 13"><path d="M14.2 4.3 L9.9 0.4 V3.0 L5.5 3.0 Q1 3.3 0.9 8.3 Q1.1 10.4 2.3 11.8 Q2.8 7.0 6 6.7 L9.9 6.7 V8.2 Z" fill="#4f565d"/></svg><div class="t cell" style="left:319px;top:635.7px;">312</div><div class="t cell" style="left:379px;top:635.7px;">Ντέμης Ρούσσος</div><div class="t cell" style="left:511px;top:627.0px;">roussos@gmail.c</div><div class="t cell" style="left:511px;top:644.5px;">om</div><div class="t cell" style="left:644px;top:635.7px;">Αλεξανδρεία</div><div class="t cell" style="left:776px;top:635.7px;">+983459809</div><div class="t cell" style="left:906px;top:635.7px;">$296.00</div><div class="t cell" style="left:1163px;top:635.7px;">-</div><div class="t cell" style="left:1006px;top:635.7px;">2020-06-04</div><div class="ab" style="left:1249px;top:630px;width:35px;height:20px;border-radius:10px;background:#236ef7"></div><div class="ab" style="left:1265px;top:632px;width:16px;height:16px;border-radius:50%;background:#fff"></div><svg class="ab" style="left:1327px;top:634px" width="15" height="12" viewBox="0 0 15 12"><path d="M7.8 1.4 H2.8 Q1.7 1.4 1.7 2.5 V9.3 Q1.7 10.4 2.8 10.4 H9.3 Q10.4 10.4 10.4 9.3 V7.2" fill="none" stroke="#565d64" stroke-width="1.15"/><path d="M6.6 7.6 L13.2 2.1" stroke="#565d64" stroke-width="2.4"/><path d="M5.79 6.65 L7.41 8.55 L5.0 9.5 Z" fill="#565d64"/></svg><svg class="ab" style="left:1353px;top:634px" width="12" height="13" viewBox="0 0 12 13"><path d="M1 3 H11.4" stroke="#565d64" stroke-width="1.1"/><path d="M4 3 V1.8 Q4 1.2 4.6 1.2 H7.8 Q8.4 1.2 8.4 1.8 V3" fill="none" stroke="#565d64" stroke-width="1.1"/><path d="M2.1 3.4 V10.8 Q2.1 11.7 3 11.7 H9.5 Q10.4 11.7 10.4 10.8 V3.4" fill="none" stroke="#565d64" stroke-width="1.1"/><path d="M4.4 5 V9.6 M6.25 5 V9.6 M8.1 5 V9.6" stroke="#565d64" stroke-width="0.9"/></svg><svg class="ab" style="left:1377px;top:635px" width="15" height="12" viewBox="0 0 15 12"><rect x="1.6" y="1.6" width="12.3" height="8.7" rx="0.6" fill="none" stroke="#565d64" stroke-width="1.1"/><path d="M1.8 3.2 L7.5 7.5 L13.7 3.2" fill="none" stroke="#565d64" stroke-width="1.1"/></svg><svg class="ab" style="left:1403px;top:634px" width="15" height="13" viewBox="0 0 15 13"><path d="M14.2 4.3 L9.9 0.4 V3.0 L5.5 3.0 Q1 3.3 0.9 8.3 Q1.1 10.4 2.3 11.8 Q2.8 7.0 6 6.7 L9.9 6.7 V8.2 Z" fill="#4f565d"/></svg><div class="t cell" style="left:319px;top:689.7px;">313</div><div class="t cell" style="left:379px;top:681.0px;">Adriano</div><div class="t cell" style="left:379px;top:698.5px;">Celentano</div><div class="t cell" style="left:511px;top:681.0px;">celentano@gmai</div><div class="t cell" style="left:511px;top:698.5px;">l.com</div><div class="t cell" style="left:644px;top:689.7px;">Milano</div><div class="t cell" style="left:776px;top:689.7px;">+2137890001</div><div class="t cell" style="left:906px;top:689.7px;">$1370.00</div><div class="t cell" style="left:1116px;top:689.7px;">Dealer</div><div class="t cell" style="left:1006px;top:689.7px;">2020-06-04</div><div class="ab" style="left:1249px;top:684px;width:35px;height:20px;border-radius:10px;background:#236ef7"></div><div class="ab" style="left:1265px;top:686px;width:16px;height:16px;border-radius:50%;background:#fff"></div><svg class="ab" style="left:1327px;top:688px" width="15" height="12" viewBox="0 0 15 12"><path d="M7.8 1.4 H2.8 Q1.7 1.4 1.7 2.5 V9.3 Q1.7 10.4 2.8 10.4 H9.3 Q10.4 10.4 10.4 9.3 V7.2" fill="none" stroke="#565d64" stroke-width="1.15"/><path d="M6.6 7.6 L13.2 2.1" stroke="#565d64" stroke-width="2.4"/><path d="M5.79 6.65 L7.41 8.55 L5.0 9.5 Z" fill="#565d64"/></svg><svg class="ab" style="left:1353px;top:688px" width="12" height="13" viewBox="0 0 12 13"><path d="M1 3 H11.4" stroke="#565d64" stroke-width="1.1"/><path d="M4 3 V1.8 Q4 1.2 4.6 1.2 H7.8 Q8.4 1.2 8.4 1.8 V3" fill="none" stroke="#565d64" stroke-width="1.1"/><path d="M2.1 3.4 V10.8 Q2.1 11.7 3 11.7 H9.5 Q10.4 11.7 10.4 10.8 V3.4" fill="none" stroke="#565d64" stroke-width="1.1"/><path d="M4.4 5 V9.6 M6.25 5 V9.6 M8.1 5 V9.6" stroke="#565d64" stroke-width="0.9"/></svg><svg class="ab" style="left:1377px;top:689px" width="15" height="12" viewBox="0 0 15 12"><rect x="1.6" y="1.6" width="12.3" height="8.7" rx="0.6" fill="none" stroke="#565d64" stroke-width="1.1"/><path d="M1.8 3.2 L7.5 7.5 L13.7 3.2" fill="none" stroke="#565d64" stroke-width="1.1"/></svg><svg class="ab" style="left:1403px;top:688px" width="15" height="13" viewBox="0 0 15 13"><path d="M14.2 4.3 L9.9 0.4 V3.0 L5.5 3.0 Q1 3.3 0.9 8.3 Q1.1 10.4 2.3 11.8 Q2.8 7.0 6 6.7 L9.9 6.7 V8.2 Z" fill="#4f565d"/></svg></body></html>
